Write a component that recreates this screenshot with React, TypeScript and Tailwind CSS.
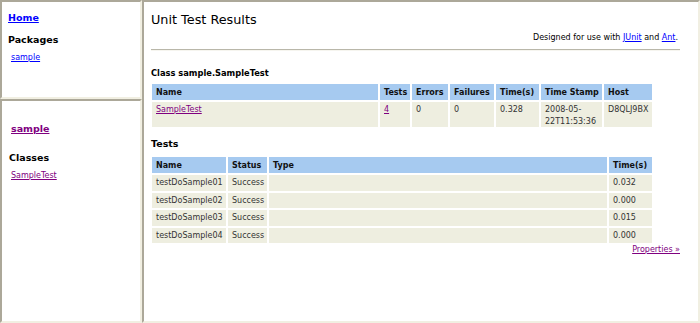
const frame =
  'border-2 border-t-[#aca899] border-l-[#aca899] border-b-[#f1efe2] border-r-[#f1efe2] bg-white overflow-hidden';

const summaryCols = [226, 30, 36, 44, 43, 61, 48];
const testCols = [74, 39, 338, 43];

const tests = [
  { name: 'testDoSample01', time: '0.032' },
  { name: 'testDoSample02', time: '0.000' },
  { name: 'testDoSample03', time: '0.015' },
  { name: 'testDoSample04', time: '0.000' },
];

function Th({ children }: { children?: React.ReactNode }) {
  return (
    <th className="bg-[#a6caf0] h-[16px] pl-[4px] pr-0 py-0 text-left align-middle font-bold text-[8px] leading-[11px] text-[#111]">
      {children}
    </th>
  );
}

export default function App() {
  return (
    <div className="w-[700px] h-[323px] flex bg-white font-['DejaVu_Sans',sans-serif] text-black">
      {/* Left frames */}
      <div className="w-[142px] flex flex-col shrink-0">
        <div className={`${frame} h-[99px] px-[6px]`}>
          <a href="#" className="block mt-[9px] text-[9.5px] leading-[14px] font-bold text-[#0000ff] underline">
            Home
          </a>
          <div className="mt-[8px] text-[9.5px] leading-[14px] font-bold">Packages</div>
          <a href="#" className="block mt-[5px] ml-[3px] text-[8px] leading-[12px] text-[#0000ff] underline">
            sample
          </a>
        </div>
        <div className={`${frame} h-[224px] px-[6px]`}>
          <a href="#" className="block mt-[21px] ml-[3px] text-[9.5px] leading-[14px] font-bold text-[#800080] underline">
            sample
          </a>
          <div className="mt-[15px] ml-[1px] text-[9.5px] leading-[14px] font-bold">Classes</div>
          <a href="#" className="block mt-[5px] ml-[3px] text-[8px] leading-[12px] text-[#800080] underline">
            SampleTest
          </a>
        </div>
      </div>

      {/* Main frame */}
      <div className={`${frame} w-[558px] h-[323px] pl-[7px] pr-[18px]`}>
        <h1 className="mt-[10px] text-[12.8px] leading-[16px] font-normal">Unit Test Results</h1>
        <div className="mt-[4px] text-right text-[8px] leading-[12px] pr-[2px]">
          Designed for use with{' '}
          <a href="#" className="text-[#0000ff] underline">JUnit</a> and{' '}
          <a href="#" className="text-[#0000ff] underline">Ant</a>.
        </div>
        <div className="mt-[5px] h-[2px] border-t border-t-[#b9b7a9] border-b border-b-[#f6f5ef]" />

        <h3 className="mt-[16px] text-[8.3px] leading-[12px] font-bold">Class sample.SampleTest</h3>
        <table className="mt-[3px] -ml-[1px] w-[504px] table-fixed border-separate border-spacing-[2px] text-[8px] text-[#333]">
          <colgroup>
            {summaryCols.map((w, i) => (
              <col key={i} style={{ width: w }} />
            ))}
          </colgroup>
          <thead>
            <tr>
              <Th>Name</Th>
              <Th>Tests</Th>
              <Th>Errors</Th>
              <Th>Failures</Th>
              <Th>Time(s)</Th>
              <Th>Time Stamp</Th>
              <Th>Host</Th>
            </tr>
          </thead>
          <tbody>
            <tr className="align-top leading-[11.5px]">
              <td className="bg-[#eeeee0] pl-[4px] pt-[2px]">
                <a href="#" className="text-[#800080] underline">SampleTest</a>
              </td>
              <td className="bg-[#eeeee0] pl-[4px] pt-[2px]">
                <a href="#" className="text-[#800080] underline">4</a>
              </td>
              <td className="bg-[#eeeee0] pl-[4px] pt-[2px]">0</td>
              <td className="bg-[#eeeee0] pl-[4px] pt-[2px]">0</td>
              <td className="bg-[#eeeee0] pl-[4px] pt-[2px]">0.328</td>
              <td className="bg-[#eeeee0] pl-[4px] pt-[2px]">
                2008-05-
                <br />
                22T11:53:36
              </td>
              <td className="bg-[#eeeee0] pl-[4px] pt-[2px]">D8QLJ9BX</td>
            </tr>
          </tbody>
        </table>

        <h2 className="mt-[9px] text-[9.5px] leading-[12px] font-bold">Tests</h2>
        <table className="mt-[5px] -ml-[1px] w-[504px] table-fixed border-separate border-spacing-[2px] text-[8px] text-[#333]">
          <colgroup>
            {testCols.map((w, i) => (
              <col key={i} style={{ width: w }} />
            ))}
          </colgroup>
          <thead>
            <tr>
              <Th>Name</Th>
              <Th>Status</Th>
              <Th>Type</Th>
              <Th>Time(s)</Th>
            </tr>
          </thead>
          <tbody>
            {tests.map((t) => (
              <tr key={t.name} className="h-[15.5px] leading-[11px]">
                <td className="bg-[#eeeee0] pl-[4px] align-middle whitespace-nowrap">{t.name}</td>
                <td className="bg-[#eeeee0] pl-[4px] align-middle">Success</td>
                <td className="bg-[#eeeee0]" />
                <td className="bg-[#eeeee0] pl-[4px] align-middle">{t.time}</td>
              </tr>
            ))}
          </tbody>
        </table>
        <div className="text-right text-[8px] leading-[9px]">
          <a href="#" className="text-[#800080] underline">Properties »</a>
        </div>
      </div>
    </div>
  );
}
